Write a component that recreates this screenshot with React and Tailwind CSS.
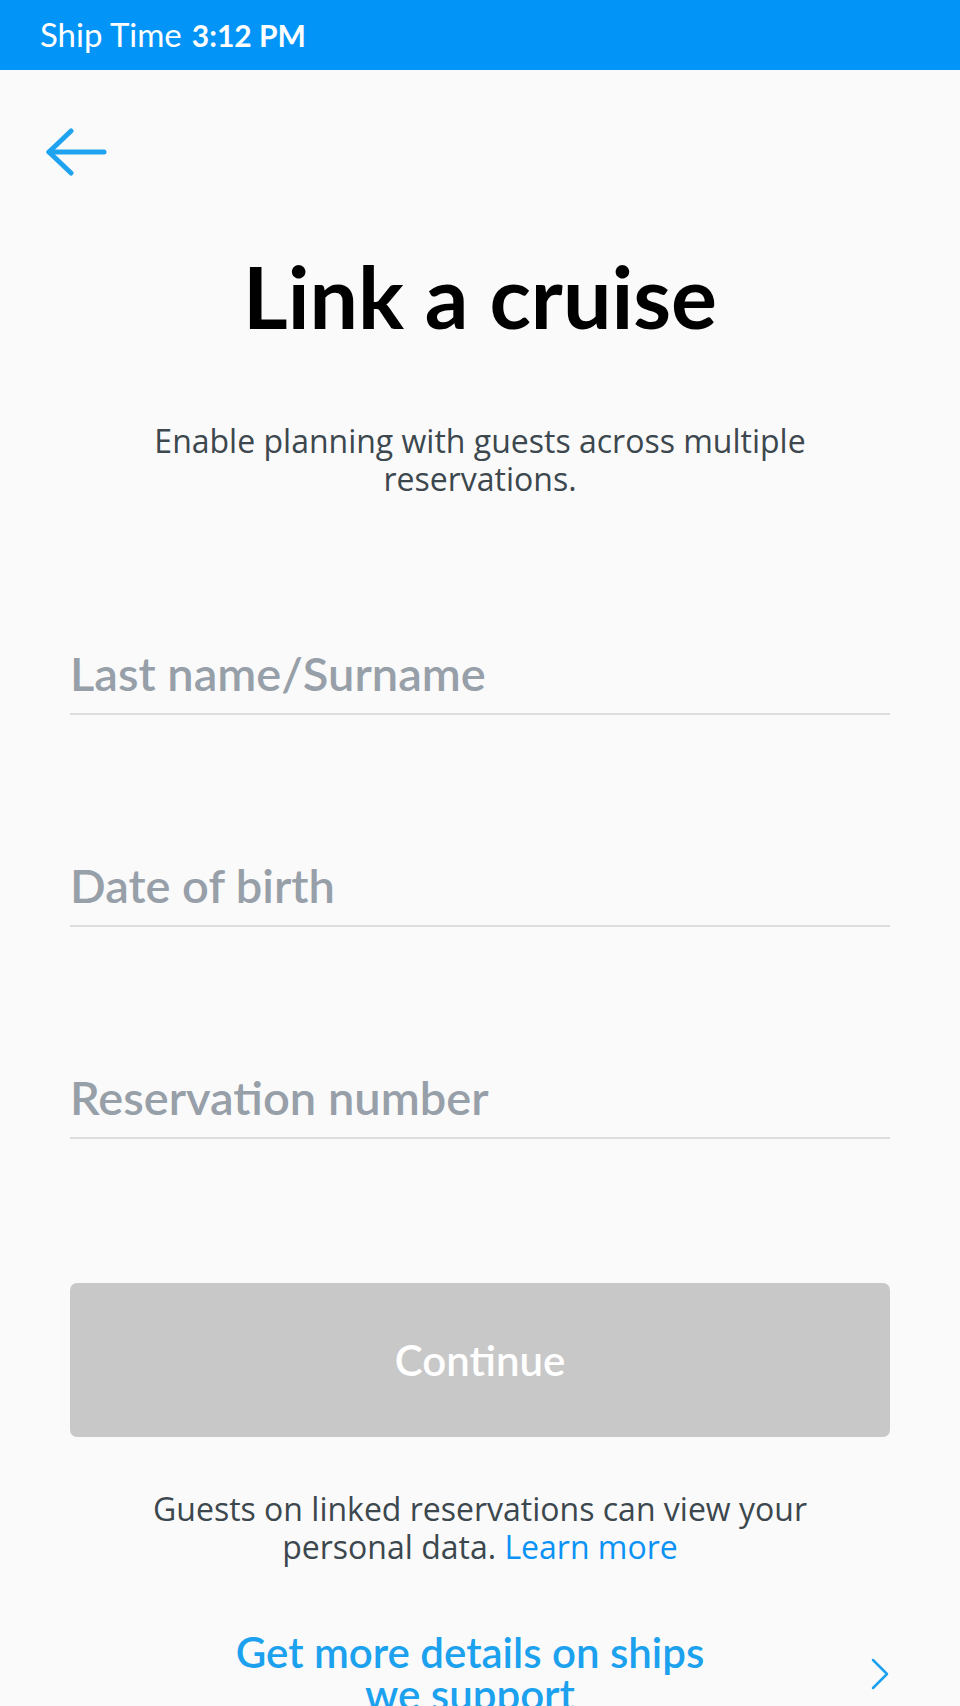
import React from 'react';

const lato = { fontFamily: 'Lato, "Liberation Sans", sans-serif' };
const body = { fontFamily: '"Open Sans", "Liberation Sans", sans-serif' };

const Field = ({ label }) => (
  <div className="border-b-2 border-[#dedede] pb-[12px]">
    <div className="text-[47px] font-semibold leading-[56px] text-[#979fa9]">{label}</div>
  </div>
);

export default function App() {
  return (
    <div className="min-h-[1706px] w-[960px] overflow-hidden bg-[#fafafa]" style={lato}>
      <div className="flex h-[70px] items-center bg-[#0394f7] pl-[40px] text-white">
        <span className="text-[33px]">Ship Time</span>
        <span className="ml-[10px] text-[30px] font-bold">3:12 PM</span>
      </div>

      <div className="pl-[46px] pt-[58px]">
        <svg width="61" height="48" viewBox="0 0 61 48" fill="none" stroke="#1fa3ee" strokeWidth="5" strokeLinecap="round" strokeLinejoin="round">
          <path d="M3 24 H58" />
          <path d="M25 3 L3 24 L25 45" />
        </svg>
      </div>

      <h1 className="mt-[72px] text-center text-[86px] font-bold leading-[96px] text-black">Link a cruise</h1>

      <p className="mx-auto mt-[78px] w-[720px] text-center text-[32px] leading-[38px] text-[#3c474e]" style={body}>
        Enable planning with guests across multiple reservations.
      </p>

      <div className="mt-[147px] flex flex-col gap-[142px] px-[70px]">
        <Field label="Last name/Surname" />
        <Field label="Date of birth" />
        <Field label="Reservation number" />
      </div>

      <div className="mt-[144px] px-[70px]">
        <button className="flex h-[154px] w-full items-center justify-center rounded-[7px] bg-[#c8c8c8] text-[42px] font-semibold text-white">
          Continue
        </button>
      </div>

      <p className="mx-auto mt-[53px] w-[720px] text-center text-[32px] leading-[38px] text-[#3c474e]" style={body}>
        Guests on linked reservations can view your personal data.{' '}
        <span className="text-[#0a93f5]">Learn more</span>
      </p>

      <div className="mt-[65px] flex px-[70px]">
        <div className="flex flex-1 justify-center">
          <div className="w-[500px] text-center text-[42px] font-semibold leading-[42px] text-[#1ba1ee]">
            Get more details on ships we support
          </div>
        </div>
        <svg className="mt-[27px] shrink-0" width="20" height="32" viewBox="0 0 20 32" fill="none" stroke="#1ba1ee" strokeWidth="2.5" strokeLinecap="round" strokeLinejoin="round">
          <path d="M3 2 L17 16 L3 30" />
        </svg>
      </div>
    </div>
  );
}
